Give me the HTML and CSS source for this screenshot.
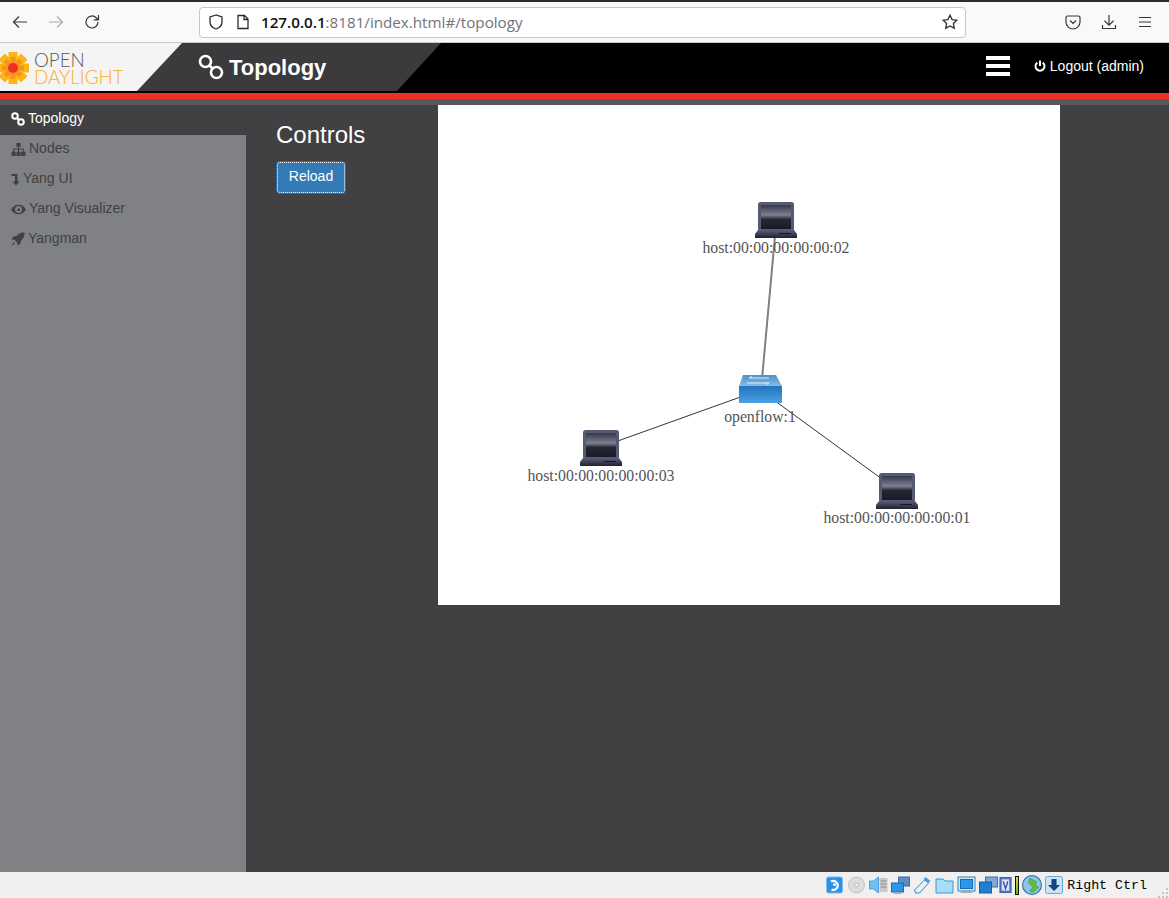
FILE: index.html
```html
<!DOCTYPE html>
<html lang="en">
<head>
<meta charset="utf-8">
<title>OpenDaylight Topology</title>
<link rel="stylesheet" href="styles.css">
</head>
<body>
<div class="app">
  <div class="browser-bar">
    <div class="nav-icons">
      <svg class="tb-icon" viewBox="0 0 16 16"><path d="M15 8H1.500M7 2.500 1.500 8 7 13.500" /></svg>
      <svg class="tb-icon muted" viewBox="0 0 16 16"><path d="M1 8h13.500M9 2.500 14.500 8 9 13.500" /></svg>
      <svg class="tb-icon" viewBox="0 0 16 16"><path d="M14 8a6 6 0 1 1-1.800-4.300L14 5.500M14.500 1v4.800H9.800" /></svg>
    </div>
    <div class="url-bar">
      <svg class="url-icon" viewBox="0 0 16 16"><path d="M8 1 2 3v5c0 3.500 3 6 6 7 3-1 6-3.500 6-7V3z" /></svg>
      <svg class="url-icon page" viewBox="0 0 16 16"><path d="M3 1.500h6.500L13 5v9.500H3zM9 1.500V5.500h4" /></svg>
      <span class="url"><b>127.0.0.1</b>:8181/index.html#/topology</span>
      <svg class="url-icon star" viewBox="0 0 16 16"><path d="M8 1.200l2.100 4.400 4.800.6-3.500 3.300.9 4.800L8 12l-4.300 2.300.9-4.800L1.100 6.200l4.800-.6z" /></svg>
    </div>
    <div class="right-icons">
      <svg class="tb-icon" viewBox="0 0 16 16"><path d="M2.500 2h11A1.500 1.500 0 0 1 15 3.500V8a7 7 0 0 1-14 0V3.500A1.500 1.500 0 0 1 2.500 2zM5 6.500l3 3 3-3" /></svg>
      <svg class="tb-icon" viewBox="0 0 16 16"><path d="M8 1v10M3.500 6.800 8 11.200l4.500-4.400M1.500 11v3.500h13V11" /></svg>
      <svg class="tb-icon" viewBox="0 0 16 16"><path d="M2 3.500h12M2 8h12M2 12.500h12" /></svg>
    </div>
  </div>

  <header class="header">
    <div class="brand">
      <div class="logo">
        <svg class="flower" viewBox="0 0 32 32">
          <g fill="#fdb515">
            <rect x="11.500" y="0" width="9" height="32" />
            <rect x="11.500" y="0" width="9" height="32" transform="rotate(45 16 16)" />
            <rect x="11.500" y="0" width="9" height="32" transform="rotate(90 16 16)" />
            <rect x="11.500" y="0" width="9" height="32" transform="rotate(135 16 16)" />
          </g>
          <g fill="#f7941e">
            <rect x="13.500" y="5" width="5" height="22" />
            <rect x="13.500" y="5" width="5" height="22" transform="rotate(45 16 16)" />
            <rect x="13.500" y="5" width="5" height="22" transform="rotate(90 16 16)" />
            <rect x="13.500" y="5" width="5" height="22" transform="rotate(135 16 16)" />
          </g>
          <circle cx="16" cy="16" r="5" fill="#ee3124" />
        </svg>
        <div class="logo-text">
          <div class="logo-open">OPEN</div>
          <div class="logo-day">DAYLIGHT</div>
        </div>
      </div>
      <div class="title">
        <svg class="title-icon" viewBox="0 0 26 26"><circle cx="7.500" cy="7.500" r="5.500" /><circle cx="18.500" cy="18.500" r="5.500" /><path d="M11.500 11.500l3 3" /></svg>
        <span>Topology</span>
      </div>
    </div>
    <div class="header-right">
      <div class="hamburger"><i></i><i></i><i></i></div>
      <div class="logout">
        <svg class="power" viewBox="0 0 12 12"><path d="M3.300 2.600a4.500 4.500 0 1 0 5.400 0M6 .5v5.500" /></svg>
        <span>Logout (admin)</span>
      </div>
    </div>
  </header>
  <div class="red-bar"></div>
  <div class="grey-bar"></div>

  <div class="main">
    <nav class="sidebar">
      <a class="item active">
        <svg class="ico ico-link" viewBox="0 0 14 14"><circle cx="4" cy="4" r="2.800" /><circle cx="10" cy="10" r="2.800" /><path d="M6 6l2 2" /></svg>
        <span>Topology</span>
      </a>
      <a class="item">
        <svg class="ico ico-wide" viewBox="0 0 14 12"><path class="fill" d="M5 0h4v3.500H7.500V5H12v3h1.500v4h-4V8H11V6H7.500v2H9v4H5V8h1.500V6H3v2h1.500v4H.5V8H2V5h4.500V3.500H5z" /></svg>
        <span>Nodes</span>
      </a>
      <a class="item">
        <svg class="ico ico-thin" viewBox="0 0 8 14"><path class="fill" d="M0 2h6v7.500h2L4.500 13.500 1 9.500h2.500V4H0z" /></svg>
        <span>Yang UI</span>
      </a>
      <a class="item item-eye">
        <svg class="ico ico-wide" viewBox="0 0 14 12"><path class="fill" fill-rule="evenodd" d="M0 6c1.600-3 4-4.500 7-4.500S12.400 3 14 6c-1.600 3-4 4.500-7 4.500S1.600 9 0 6zm7-3.300a3.300 3.300 0 1 0 0 6.600 3.300 3.300 0 0 0 0-6.600zM7 4.500A1.500 1.500 0 1 1 5.500 6c.8 0 1.500-.7 1.500-1.500z" /></svg>
        <span>Yang Visualizer</span>
      </a>
      <a class="item">
        <svg class="ico" viewBox="0 0 14 14"><path class="fill" d="M13.500.5c.3 3.500-1 6-3.500 8l-.5 3-3 2-.3-3-2.700-2.700-3-.3 2-3 3-.5c2-2.500 4.500-3.800 8-3.500zM3 10l1 1-2.500 2.500-.5-.5z" /></svg>
        <span>Yangman</span>
      </a>
    </nav>

    <section class="controls">
      <h3>Controls</h3>
      <button class="reload" type="button"><span>Reload</span></button>
    </section>

    <div class="canvas">
      <svg class="graph" viewBox="0 0 622 500" width="622" height="500">
        <defs>
          <linearGradient id="screen" x1="0" y1="0" x2="0" y2="1">
            <stop offset="0" stop-color="#35374a" />
            <stop offset=".42" stop-color="#7d8090" />
            <stop offset=".6" stop-color="#262733" />
            <stop offset="1" stop-color="#1a1b26" />
          </linearGradient>
          <linearGradient id="base" x1="0" y1="0" x2="0" y2="1">
            <stop offset="0" stop-color="#5a5e78" />
            <stop offset="1" stop-color="#20212e" />
          </linearGradient>
          <linearGradient id="sw-front" x1="0" y1="0" x2="0" y2="1">
            <stop offset="0" stop-color="#2273bc" />
            <stop offset="1" stop-color="#4aa2e2" />
          </linearGradient>
          <linearGradient id="sw-top" x1="0" y1="0" x2="0" y2="1">
            <stop offset="0" stop-color="#4f8fc8" />
            <stop offset="1" stop-color="#86bce6" />
          </linearGradient>
          <g id="laptop">
            <rect x="3" y="1" width="36" height="29" rx="2.500" fill="#555a75" />
            <rect x="6" y="4" width="30" height="24" fill="url(#screen)" />
            <path d="M3 29h36l3 4v4H0v-4z" fill="url(#base)" />
            <rect x="24" y="32" width="12" height="1" fill="#14151e" />
          </g>
        </defs>
        <line class="link thick" x1="338" y1="120" x2="323" y2="285" />
        <line class="link" x1="322" y1="285" x2="163" y2="342" />
        <line class="link" x1="322" y1="285" x2="459" y2="385" />
        <use href="#laptop" x="317" y="96" />
        <use href="#laptop" x="142" y="324" />
        <use href="#laptop" x="438" y="367" />
        <g class="switch">
          <path d="M305 270h33l6 11H301z" fill="url(#sw-top)" />
          <rect x="301" y="281" width="43" height="17" fill="url(#sw-front)" />
          <path d="M311 273h20M309 278h22M311 273l3-1.500M331 278l-3 1.500" stroke="#e2f0fa" stroke-width="1" fill="none" />
        </g>
        <text class="label" x="338" y="148">host:00:00:00:00:00:02</text>
        <text class="label" x="322" y="317">openflow:1</text>
        <text class="label" x="163" y="376">host:00:00:00:00:00:03</text>
        <text class="label" x="459" y="418">host:00:00:00:00:00:01</text>
      </svg>
    </div>
  </div>

  <footer class="status">
    <svg class="st" viewBox="0 0 18 18"><rect x="1" y="1" width="16" height="16" rx="2" fill="#2f8fe0" stroke="#7fbdf0" /><path d="M5.500 5.500a4.500 4.500 0 1 1 .5 8" fill="none" stroke="#fff" stroke-width="2.200" /><circle cx="9" cy="8.500" r="1.500" fill="#fff" /></svg>
    <svg class="st" viewBox="0 0 18 18"><circle cx="9" cy="9" r="8" fill="#dcdcdc" stroke="#c4c4c4" /><circle cx="9" cy="9" r="2" fill="#f4f4f4" stroke="#bbb" /></svg>
    <svg class="st" viewBox="0 0 18 18"><path d="M0 5h4l5-4v16l-5-4H0z" fill="#6fc0ee" stroke="#2f86c8" stroke-width=".7" /><rect x="10" y="2" width="8" height="14" fill="#c9c9c9" /><path d="M11 5h6M11 8h6M11 11h6" stroke="#888" /></svg>
    <svg class="st" viewBox="0 0 18 18"><rect x="7" y="1" width="11" height="9" fill="#5d8ec0" stroke="#3c6da3" /><rect x="0" y="7" width="12" height="9" fill="#2b97e8" stroke="#1c6bb0" /><rect x="2" y="16" width="8" height="2" fill="#aaa" /></svg>
    <svg class="st" viewBox="0 0 18 18"><path d="M1 14 11 4l4 3-9 10H2z" fill="#e4f3fc" stroke="#2f86c8" /><path d="M12 1l5 4-2 2-5-4z" fill="#4d9fdc" /></svg>
    <svg class="st" viewBox="0 0 18 18"><path d="M.5 3h7l2 2h8v12H.5z" fill="#a9dcf8" stroke="#3b9ad8" /></svg>
    <svg class="st" viewBox="0 0 18 18"><rect x=".5" y="1" width="17" height="14" fill="#cde4f5" stroke="#2f86c8" /><rect x="3" y="3.500" width="12" height="9" fill="#2b97e8" stroke="#1c6bb0" /><rect x="3" y="15" width="12" height="2" fill="#aaa" /></svg>
    <svg class="st" viewBox="0 0 18 18"><rect x="6" y="1" width="12" height="10" fill="#7fa8d8" stroke="#3c6da3" /><rect x="0" y="6" width="12" height="11" fill="#1f7fd2" stroke="#1c5f9f" /></svg>
    <svg class="st st-thin" viewBox="0 0 14 18"><rect x="1" y="1" width="12" height="16" fill="#5a7cc8" stroke="#3557a6" /><rect x="3" y="3" width="8" height="12" fill="#dfe7f7" /><path d="M4.500 5 7 13l2.500-8" fill="none" stroke="#3557a6" stroke-width="1.500" /></svg>
    <div class="meter"><i></i></div>
    <svg class="st st-globe" viewBox="0 0 18 18"><circle cx="9" cy="9" r="8.500" fill="#8cc4ea" stroke="#2f6ea8" /><path d="M7 3l6 3-1 3 3 2-6 5-2-2 3-3-4-4z" fill="#5cc23c" stroke="#2f8a20" stroke-width=".5" /></svg>
    <svg class="st st-down" viewBox="0 0 18 18"><rect x=".5" y=".5" width="17" height="17" rx="2" fill="#cbe4f7" stroke="#6aa6d8" /><path d="M6.500 3h5v6H15l-6 6-6-6h3.500z" fill="#15457e" /></svg>
    <span class="host-key">Right Ctrl</span>
    <svg class="grip" viewBox="0 0 10 10"><path d="M8 0h2v2H8zM4 4h2v2H4zM8 4h2v2H8zM0 8h2v2H0zM4 8h2v2H4zM8 8h2v2H8z" /></svg>
  </footer>
</div>
</body>
</html>
```

FILE: styles.css
```css
* { box-sizing: border-box; }
html, body { margin: 0; height: 100%; overflow: hidden; }
body { font-family: "Liberation Sans", Arial, sans-serif; font-size: 14px; color: #fff; background: #414042; }
.app { display: flex; flex-direction: column; height: 898px; }

.browser-bar { flex: none; height: 43px; display: flex; align-items: center; background: #f9f9fa; border-top: 2px solid #2b2b2b; border-bottom: 1px solid #c8c8c8; padding: 0 0 0 12px; }
.nav-icons { display: flex; gap: 20px; width: 187px; }
.tb-icon { width: 16px; height: 16px; fill: none; stroke: #38383d; stroke-width: 1.200; }
.tb-icon.muted { stroke: #aaa; }
.url-bar { width: 767px; height: 31px; display: flex; align-items: center; background: #fff; border: 1px solid #c6c6c8; border-radius: 4px; padding: 0 7px 0 8px; }
.url-icon { width: 16px; height: 16px; flex: none; fill: none; stroke: #2b2b2f; stroke-width: 1.300; }
.url-icon.page { margin-left: 11px; }
.url { flex: 1; margin-left: 10px; font-family: "Open Sans", sans-serif; font-size: 15.200px; color: #737378; white-space: nowrap; }
.url b { font-weight: 600; color: #111; }
.right-icons { display: flex; gap: 20px; margin-left: 99px; }

.header { flex: none; height: 50px; display: flex; justify-content: space-between; background: #000; }
.brand { width: 441px; height: 48px; display: flex; background: #3b3a3c; clip-path: polygon(0 0, 100% 0, 397px 100%, 0 100%); }
.logo { width: 182px; height: 48px; display: flex; align-items: center; gap: 5px; background: #f4f4f4; clip-path: polygon(0 0, 100% 0, 137px 100%, 0 100%); }
.flower { width: 32px; height: 32px; margin: 2px 0 0 -3px; flex: none; }
.logo-text { display: flex; flex-direction: column; margin-top: 2px; font-family: Lato, sans-serif; font-weight: 300; font-size: 18.800px; line-height: 17px; }
.logo-open { color: #58595b; }
.logo-day { color: #f9ae2b; }
.title { display: flex; align-items: center; gap: 5px; margin-left: 16px; padding-top: 1px; font-size: 22px; font-weight: 700; color: #fff; }
.title-icon { width: 26px; height: 26px; margin-bottom: 1px; fill: none; stroke: #fff; stroke-width: 2.600; }
.header-right { display: flex; align-items: center; height: 48px; padding: 0 25px 2px 0; gap: 24px; }
.hamburger { display: flex; flex-direction: column; gap: 4px; width: 24px; }
.hamburger i { display: block; height: 4px; background: #fff; }
.logout { display: flex; align-items: center; gap: 4px; }
.power { width: 12px; height: 12px; fill: none; stroke: #fff; stroke-width: 2; }

.red-bar { flex: none; height: 6px; background: #ee3124; }
.grey-bar { flex: none; height: 6px; background: #58585a; }

.main { flex: 1; min-height: 0; display: flex; background: #414042; }
.sidebar { width: 246px; flex: none; background: #808184; }
.item { display: flex; align-items: center; height: 30px; padding: 0 0 4px 11px; gap: 3px; color: #414042; }
.item.active { background: #414042; color: #fff; }
.ico { width: 14px; height: 14px; flex: none; margin-top: 2px; }
.ico-wide { width: 15px; height: 13px; }
.ico-thin { width: 9px; height: 14px; }
.ico-link { fill: none; stroke: #fff; stroke-width: 2; }
.fill { fill: #414042; }

.controls { width: 192px; flex: none; padding: 17px 0 0 30px; }
.controls h3 { margin: 0 0 13px; font-size: 24px; font-weight: 400; line-height: 26px; color: #fff; }
.reload { display: block; width: 70px; height: 33px; padding: 0 0 3px; background: #337ab7; border: 1px solid #2e6da4; border-radius: 4px; color: #fff; font: 14px "Liberation Sans", Arial, sans-serif; outline: 1px dotted #fff; outline-offset: -2px; }

.canvas { width: 622px; height: 500px; flex: none; background: #fff; }
.graph { display: block; }
.link { stroke: #333; stroke-width: 1; }
.link.thick { stroke: #808080; stroke-width: 2; }
.label { font-family: "Liberation Serif", "Times New Roman", serif; font-size: 15.750px; fill: #555; text-anchor: middle; }

.status { flex: none; height: 26px; display: flex; align-items: center; justify-content: flex-end; gap: 3px; background: #f0f0f0; color: #000; }
.st { width: 19px; height: 18px; flex: none; }
.st-thin { width: 13px; margin-left: -2px; }
.st-globe { width: 20px; height: 20px; }
.st-down { width: 18px; }
.meter { width: 4px; height: 19px; background: #111; padding: 1px; display: flex; align-items: flex-end; }
.meter i { display: block; width: 2px; height: 17px; background: linear-gradient(#e8d820, #50c020); }
.host-key { font-family: "Liberation Mono", monospace; font-size: 13.300px; margin-left: 1px; }
.grip { width: 10px; height: 10px; margin-left: 8px; margin-right: 1px; align-self: flex-end; fill: #c4c4c4; }
```
